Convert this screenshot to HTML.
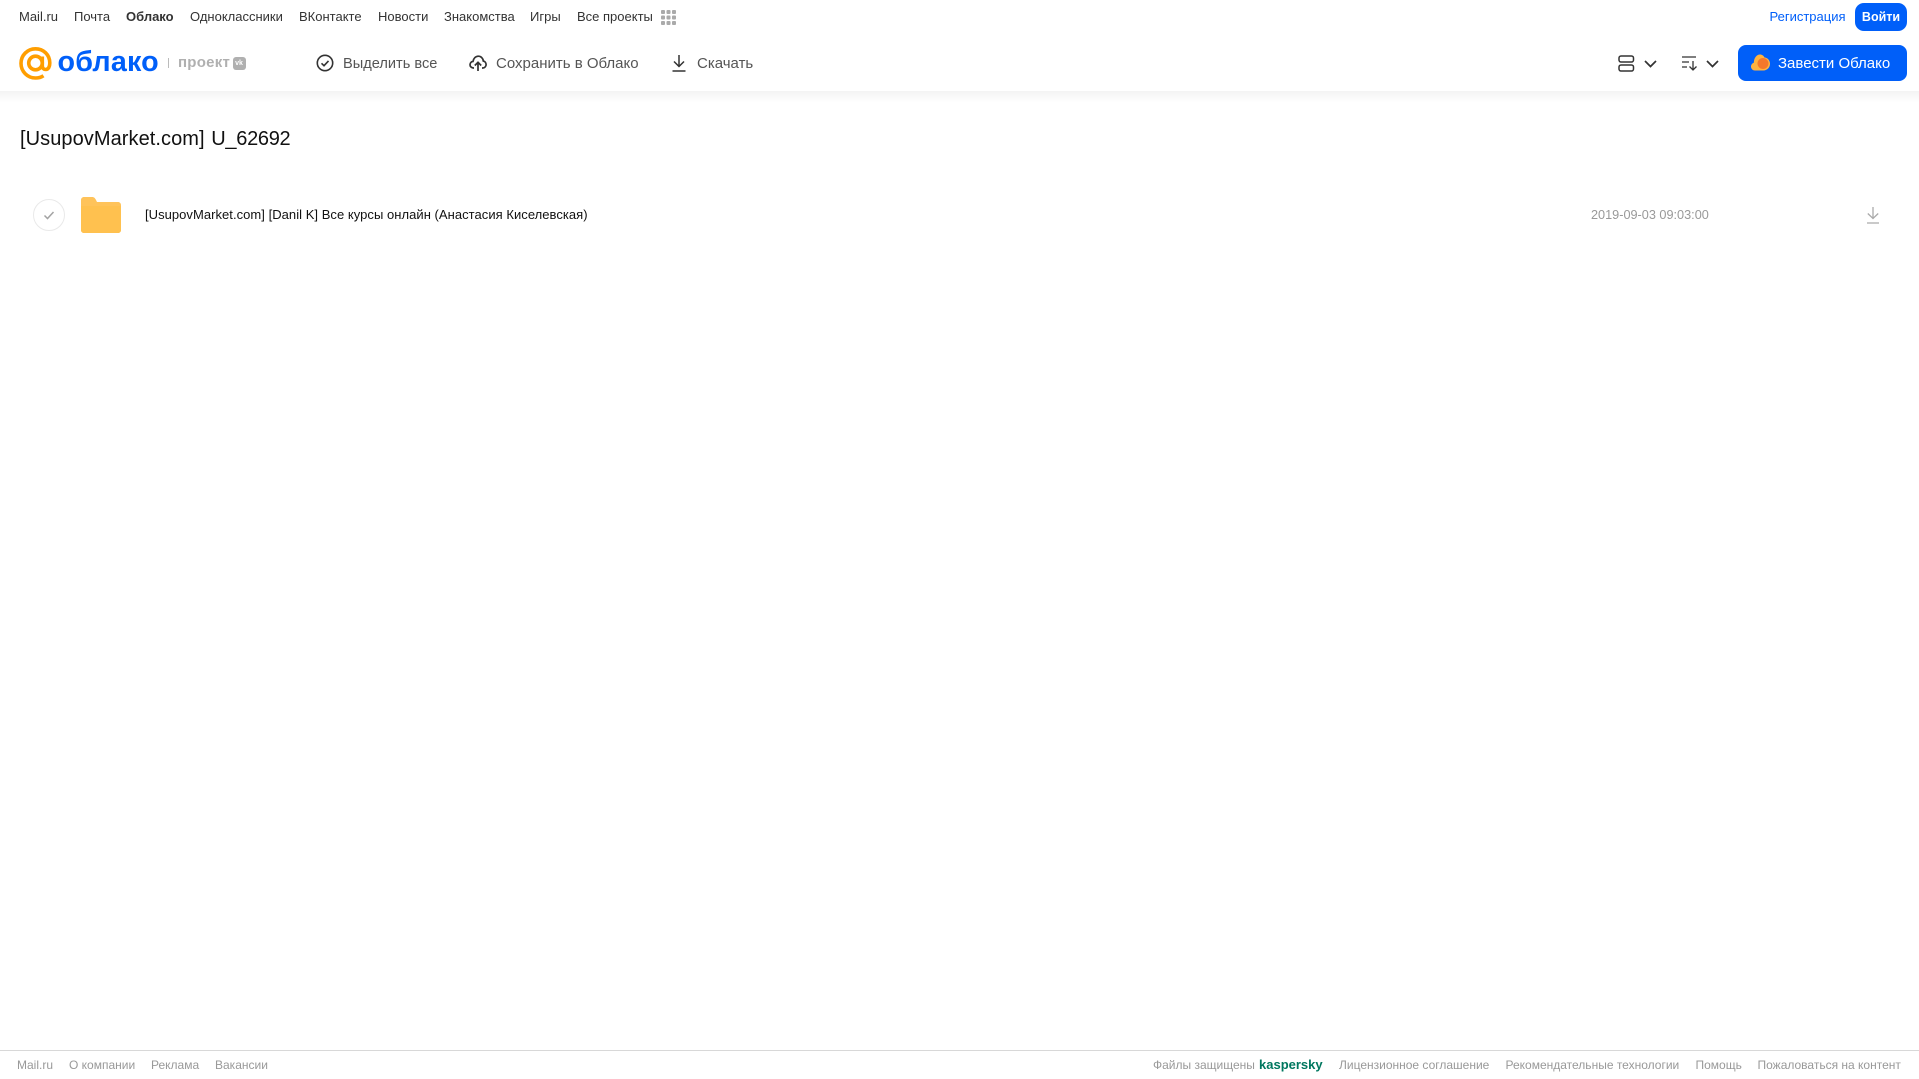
<!DOCTYPE html>
<html lang="ru"><head><meta charset="utf-8"><title>Облако</title>
<style>
html,body{margin:0;padding:0;background:#fff}
body{width:1919px;height:1079px;position:relative;overflow:hidden;font-family:"Liberation Sans",Arial,sans-serif}
.t{position:absolute;white-space:nowrap;line-height:20px}
.n{top:7px;font-size:13px;color:#333}
.a{top:53.5px;font-size:15px;color:#555}
.f{top:1055px;font-size:12px;color:#999}
svg{position:absolute;overflow:visible}
</style></head><body>
<div style="position:absolute;left:0;top:91px;width:1919px;height:12px;background:linear-gradient(#f3f3f3,#fff)"></div>
<span class="t n" style="left:19px">Mail.ru</span>
<span class="t n" style="left:74px">Почта</span>
<span class="t n" style="left:126px;font-weight:bold">Облако</span>
<span class="t n" style="left:190px">Одноклассники</span>
<span class="t n" style="left:299px">ВКонтакте</span>
<span class="t n" style="left:378px">Новости</span>
<span class="t n" style="left:444px">Знакомства</span>
<span class="t n" style="left:530px">Игры</span>
<span class="t n" style="left:577px">Все проекты</span>
<svg style="left:661px;top:10px" width="15" height="15" fill="#aaa"><rect width="4" height="4" rx="1"/><rect x="5.5" width="4" height="4" rx="1"/><rect x="11" width="4" height="4" rx="1"/><rect y="5.5" width="4" height="4" rx="1"/><rect x="5.5" y="5.5" width="4" height="4" rx="1"/><rect x="11" y="5.5" width="4" height="4" rx="1"/><rect y="11" width="4" height="4" rx="1"/><rect x="5.5" y="11" width="4" height="4" rx="1"/><rect x="11" y="11" width="4" height="4" rx="1"/></svg>
<span class="t" style="left:1769.5px;top:7px;font-size:13px;color:#005ff9">Регистрация</span>
<div class="t" style="left:1855px;top:3px;width:52px;height:28px;line-height:28px;background:#005ff9;border-radius:9px;color:#fff;font-size:12.5px;font-weight:bold;text-align:center">Войти</div>
<svg style="left:19px;top:47px" width="33" height="33" viewBox="0 0 33 33" fill="none" stroke="#ff9e00" stroke-width="3.6"><circle cx="16.5" cy="16" r="6.8"/><path d="M23.3 9.5v9.2c0 2.6 1.6 3.8 3.4 3.8 2.7 0 4.1-3 4.1-6.5C30.8 7.8 24.5 1.8 16.5 1.8 8.4 1.8 2 8.3 2 16.4s6.4 14.6 14.5 14.6c3 0 5.7-.8 8-2.3"/></svg>
<span class="t" style="left:57.5px;top:44px;line-height:36px;font-size:28.7px;font-weight:bold;color:#005ff9;letter-spacing:.2px">облако</span>
<div style="position:absolute;left:168px;top:58px;width:1px;height:10px;background:#bbb"></div>
<span class="t" style="left:178px;top:53px;font-size:15px;font-weight:bold;color:#b0b0b0;letter-spacing:.25px">проект</span>
<div style="position:absolute;left:232.5px;top:56.5px;width:13px;height:13px;background:#b0b0b0;border-radius:3px;color:#fff;font:bold 7px/13px 'Liberation Sans',sans-serif;text-align:center">vk</div>
<svg style="left:316px;top:54px" width="18" height="18" viewBox="0 0 18 18" fill="none" stroke="#333" stroke-width="1.6"><circle cx="9" cy="9" r="7.7"/><path d="M5.5 9.3l2.5 2.4 4.5-4.8"/></svg>
<span class="t a" style="left:343px;font-size:14.6px">Выделить все</span>
<svg style="left:469px;top:54px" width="18" height="18" viewBox="0 0 18 18" fill="none" stroke="#333" stroke-width="1.7"><path d="M5 14H4.500C2.500 14 1 12.500 1 10.700c0-1.800 1.400-3.200 3-3.300C4.500 4.500 6.500 2.200 9.300 2.200c2.700 0 4.800 2.100 5 4.800 1.600.3 2.800 1.900 2.800 3.600 0 1.800-1.400 3.400-3.300 3.400H13"/><path d="M9 17V9M5.800 11.500L9 8.300l3.200 3.200"/></svg>
<span class="t a" style="left:496px">Сохранить в Облако</span>
<svg style="left:671px;top:54px" width="16" height="18" viewBox="0 0 16 18" fill="none" stroke="#333" stroke-width="1.5"><path d="M8 1v11M3 7.500l5 5 5-5M1.500 17h13"/></svg>
<span class="t a" style="left:697px">Скачать</span>
<svg style="left:1618px;top:55px" width="17" height="17" viewBox="0 0 17 17" fill="none" stroke="#333" stroke-width="1.5"><rect x="1" y="1" width="14.5" height="6" rx="2"/><rect x="1" y="10" width="14.5" height="6" rx="2"/></svg>
<svg style="left:1643.5px;top:60px" width="13" height="8" fill="none" stroke="#333" stroke-width="1.7"><path d="M1 1l5.500 5.500L12 1"/></svg>
<svg style="left:1681px;top:55px" width="17" height="17" viewBox="0 0 17 17" fill="none" stroke="#333" stroke-width="1.3"><path d="M1 2h14M1 7h7M1 12h5M12 6v9M8.500 11.500L12 15l3.500-3.500"/></svg>
<svg style="left:1705.5px;top:60px" width="13" height="8" fill="none" stroke="#333" stroke-width="1.7"><path d="M1 1l5.500 5.500L12 1"/></svg>
<div style="position:absolute;left:1738px;top:45px;width:169px;height:36px;background:#005ff9;border-radius:8px"></div>
<svg style="left:1751px;top:54px" width="19" height="17" viewBox="0 0 19 17"><path d="M4 16.500C1.800 16.500 0 14.800 0 12.500c0-1.800 1.200-3.300 2.800-3.800C3 4 5.500 0.500 9 0.500c2 0 3.700 1.200 4.500 3 3 .2 5.500 2.800 5.500 6.300 0 3.700-2.800 6.700-6.500 6.700z" fill="#ffb340"/><circle cx="12" cy="9.500" r="5.500" fill="#f5782a"/></svg>
<span class="t" style="left:1778px;top:53.5px;font-size:15px;color:#fff">Завести Облако</span>
<span class="t" style="left:20px;top:127px;line-height:24px;font-size:20px;color:#111;letter-spacing:.07px;word-spacing:1px">[UsupovMarket.com] <span style="letter-spacing:-.3px">U_62692</span></span>
<svg style="left:33px;top:199px" width="32" height="32" viewBox="0 0 32 32" fill="none"><circle cx="16" cy="16" r="15.5" stroke="#e9e9e9"/><path d="M11.500 16.500l3 3 6-6.500" stroke="#a3a3a3" stroke-width="1.5"/></svg>
<svg style="left:81px;top:197px" width="40" height="36" viewBox="0 0 40 36"><path d="M0 3C0 1.300 1.300 0 3 0h8c2 0 3 1 4 3l1 2h21c1.700 0 3 1.300 3 3v25c0 1.700-1.300 3-3 3H3c-1.700 0-3-1.300-3-3z" fill="#ffc35a"/><path d="M0 9h40v24c0 1.700-1.300 3-3 3H3c-1.700 0-3-1.300-3-3z" fill="#ffc14f"/></svg>
<span class="t" style="left:145px;top:205px;font-size:13px;color:#111;letter-spacing:.04px">[UsupovMarket.com] [Danil K] Все курсы онлайн (Анастасия Киселевская)</span>
<span class="t" style="left:1591px;top:205px;font-size:12.7px;color:#999">2019-09-03 09:03:00</span>
<svg style="left:1866px;top:207px" width="14" height="17" viewBox="0 0 14 17" fill="none" stroke="#aaa" stroke-width="1.3"><path d="M7 0v11M1.800 6.500L7 11.500l5.200-5M1 16h12"/></svg>
<div style="position:absolute;left:0;top:1050px;width:1919px;height:1px;background:#d8d8d8"></div>
<span class="t f" style="left:17px">Mail.ru</span>
<span class="t f" style="left:69px">О компании</span>
<span class="t f" style="left:151px">Реклама</span>
<span class="t f" style="left:215px">Вакансии</span>
<span class="t f" style="left:1153px">Файлы защищены</span>
<span class="t f" style="left:1259px;color:#00775f;font-weight:bold;font-size:13px">kaspersky</span>
<span class="t f" style="left:1339px">Лицензионное соглашение</span>
<span class="t f" style="left:1505.5px">Рекомендательные технологии</span>
<span class="t f" style="left:1695.5px">Помощь</span>
<span class="t f" style="left:1757.5px">Пожаловаться на контент</span>
</body></html>
